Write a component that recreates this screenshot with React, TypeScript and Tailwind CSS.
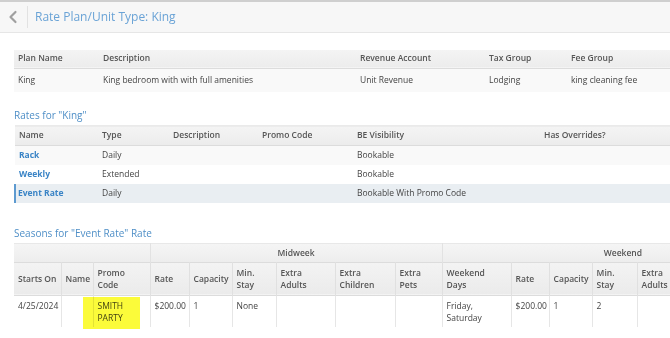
import { ChevronLeft } from 'lucide-react';

const planCols = [85, 257, 129, 82, 103];
const rateCols = [83, 71, 89, 95, 187, 131];
const seasonCols = [47, 32, 57, 39, 43, 44, 59, 60, 47, 69, 38, 43, 45, 59, 60, 47];

const seasonHeads: [string, string?][] = [
  ['Starts On'],
  ['Name'],
  ['Promo', 'Code'],
  ['Rate'],
  ['Capacity'],
  ['Min.', 'Stay'],
  ['Extra', 'Adults'],
  ['Extra', 'Children'],
  ['Extra', 'Pets'],
  ['Weekend', 'Days'],
  ['Rate'],
  ['Capacity'],
  ['Min.', 'Stay'],
  ['Extra', 'Adults'],
  ['Extra', 'Children'],
  ['Extra', 'Pets'],
];

function SectionTitle({ children }: { children: React.ReactNode }) {
  return <div className="text-[10px] leading-[14px] text-[#4f8fc7] mb-[3px]">{children}</div>;
}

export default function App() {
  return (
    <div className="w-[670px] h-[338px] overflow-hidden bg-white text-[#444] font-['Open_Sans',sans-serif]">
      {/* top bar */}
      <header className="h-[33px] bg-[#f7f7f7] border-t-2 border-t-[#cfcfcf] border-b border-b-[#e6e6e6] flex items-center">
        <div className="w-[27px] flex justify-center">
          <ChevronLeft className="w-[20px] h-[20px] text-[#a0a0a0] -ml-[2px]" strokeWidth={2.6} />
        </div>
        <div className="w-px h-[22px] bg-[#e2e2e2]" />
        <h1 className="ml-[7px] text-[12px] text-[#6aa3d6]">Rate Plan/Unit Type: King</h1>
      </header>

      <div className="pl-[14px]">
        {/* plan */}
        <table className="mt-[17px] table-fixed border-collapse text-[8.5px] w-[656px]">
          <colgroup>
            {planCols.map((w, i) => (
              <col key={i} style={{ width: w }} />
            ))}
          </colgroup>
          <thead>
            <tr className="h-[18px] bg-gradient-to-b from-[#f4f4f4] to-[#ececec] border-b border-[#dcdcdc] text-[#555] text-left">
              <th className="pl-[4px] font-semibold">Plan Name</th>
              <th className="pl-[4px] font-semibold">Description</th>
              <th className="pl-[4px] font-semibold">Revenue Account</th>
              <th className="pl-[4px] font-semibold">Tax Group</th>
              <th className="pl-[4px] font-semibold">Fee Group</th>
            </tr>
          </thead>
          <tbody>
            <tr className="h-[24px] bg-[#f9f9f9]">
              <td className="pl-[4px]">King</td>
              <td className="pl-[4px]">King bedroom with with full amenities</td>
              <td className="pl-[4px]">Unit Revenue</td>
              <td className="pl-[4px]">Lodging</td>
              <td className="pl-[4px]">king cleaning fee</td>
            </tr>
          </tbody>
        </table>

        {/* rates */}
        <div className="mt-[16px]">
          <SectionTitle>Rates for "King"</SectionTitle>
          <table className="table-fixed border-collapse text-[8.5px] w-[656px]">
            <colgroup>
              {rateCols.map((w, i) => (
                <col key={i} style={{ width: w }} />
              ))}
            </colgroup>
            <thead>
              <tr className="h-[20px] bg-gradient-to-b from-[#f4f4f4] to-[#ececec] border-t border-t-[#eaeaea] border-b border-[#dcdcdc] text-[#555] text-left">
                {['Name', 'Type', 'Description', 'Promo Code', 'BE Visibility', 'Has Overrides?'].map((h) => (
                  <th key={h} className="pl-[4px] font-semibold">{h}</th>
                ))}
              </tr>
            </thead>
            <tbody>
              {[
                ['Rack', 'Daily', 'Bookable', 'bg-[#f9f9f9]'],
                ['Weekly', 'Extended', 'Bookable', 'bg-white'],
                ['Event Rate', 'Daily', 'Bookable With Promo Code', 'bg-[#e9eef2]'],
              ].map(([n, t, v, bg], i) => (
                <tr key={n} className={`h-[19px] ${bg}`}>
                  <td
                    className={`font-bold text-[#3a84c6] ${
                      i === 2 ? 'pl-[2px] border-l-2 border-l-[#5d9ad0]' : 'pl-[4px]'
                    }`}
                  >
                    {n}
                  </td>
                  <td className="pl-[4px]">{t}</td>
                  <td />
                  <td />
                  <td className="pl-[4px]">{v}</td>
                  <td />
                </tr>
              ))}
            </tbody>
          </table>
        </div>

        {/* seasons */}
        <div className="mt-[23px]">
          <SectionTitle>Seasons for "Event Rate" Rate</SectionTitle>
          <table className="table-fixed border-collapse text-[8.5px] leading-[12px] w-[789px]">
            <colgroup>
              {seasonCols.map((w, i) => (
                <col key={i} style={{ width: w }} />
              ))}
            </colgroup>
            <thead className="text-[#555]">
              <tr className="h-[19px] bg-gradient-to-b from-[#f5f5f5] to-[#ededed] border-t border-t-[#e8e8e8]">
                <th colSpan={3} className="border-r border-[#e2e2e2]" />
                <th colSpan={6} className="font-semibold text-center border-r border-[#e2e2e2]">Midweek</th>
                <th colSpan={7} className="font-semibold text-center">Weekend</th>
              </tr>
              <tr className="h-[33px] bg-gradient-to-b from-[#f3f3f3] to-[#ebebeb] border-t border-b border-[#dcdcdc] text-left">
                {seasonHeads.map(([a, b], i) => (
                  <th key={i} className="px-[4px] font-semibold border-r border-[#e0e0e0] align-middle whitespace-nowrap">
                    {a}
                    {b && (
                      <>
                        <br />
                        {b}
                      </>
                    )}
                  </th>
                ))}
              </tr>
            </thead>
            <tbody>
              <tr className="h-[32px] align-top">
                <td className="px-[4px] pt-[4px] border-r border-[#e6e6e6]">4/25/2024</td>
                <td className="border-r border-[#e6e6e6]" />
                <td className="relative px-[4px] pt-[4px] border-r border-[#e6e6e6]">
                  SMITH
                  <br />
                  PARTY
                  <span className="absolute left-[-11px] top-[1px] w-[57px] h-[32px] bg-[#fbfb3a] mix-blend-multiply" />
                </td>
                <td className="px-[4px] pt-[4px] border-r border-[#e6e6e6]">$200.00</td>
                <td className="px-[4px] pt-[4px] border-r border-[#e6e6e6]">1</td>
                <td className="px-[4px] pt-[4px] border-r border-[#e6e6e6]">None</td>
                <td className="border-r border-[#e6e6e6]" />
                <td className="border-r border-[#e6e6e6]" />
                <td className="border-r border-[#e6e6e6]" />
                <td className="px-[4px] pt-[4px] border-r border-[#e6e6e6]">
                  Friday,
                  <br />
                  Saturday
                </td>
                <td className="px-[4px] pt-[4px] border-r border-[#e6e6e6]">$200.00</td>
                <td className="px-[4px] pt-[4px] border-r border-[#e6e6e6]">1</td>
                <td className="px-[4px] pt-[4px] border-r border-[#e6e6e6]">2</td>
                <td className="border-r border-[#e6e6e6]" />
                <td className="border-r border-[#e6e6e6]" />
                <td />
              </tr>
            </tbody>
          </table>
        </div>
      </div>
    </div>
  );
}
